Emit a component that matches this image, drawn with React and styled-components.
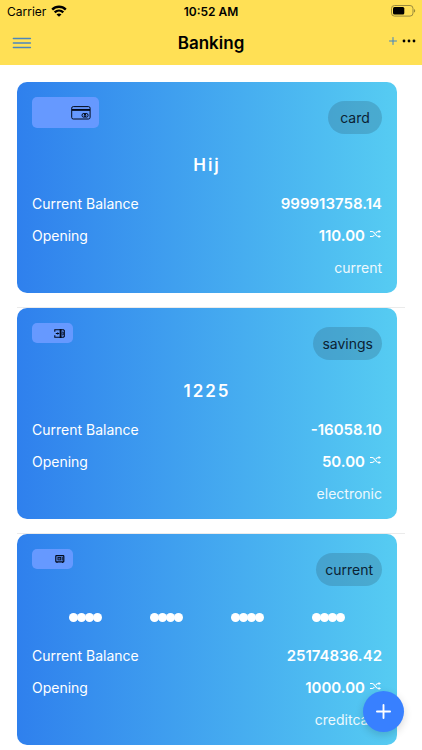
import React from "react";
import styled, { createGlobalStyle } from "styled-components";

const GlobalStyle = createGlobalStyle`
  * { box-sizing: border-box; }
  body {
    margin: 0;
    background: #fff;
    color: #000;
    font-family: Inter, "Liberation Sans", sans-serif;
    font-size: 14px;
  }
  button {
    padding: 0;
    border: 0;
    background: none;
    color: inherit;
    font: inherit;
    cursor: pointer;
  }
  svg { display: block; }
`;

const Header = styled.header`
  height: 65px;
  background: #ffe055;
`;

const StatusBar = styled.div`
  display: grid;
  grid-template-columns: 1fr auto 1fr;
  align-items: center;
  height: 22px;
  padding: 0 6px;
  font-size: 12px;
`;

const Carrier = styled.span`
  display: flex;
  align-items: center;
  gap: 5px;
  padding-left: 1px;
`;

const Clock = styled.time`
  font-weight: 600;
`;

const BatterySlot = styled.span`
  justify-self: end;
`;

const NavBar = styled.nav`
  display: grid;
  grid-template-columns: 1fr auto 1fr;
  align-items: center;
  height: 42px;
  padding: 0 6px;
`;

const MenuButton = styled.button`
  justify-self: start;
  padding-left: 6px;
`;

const Title = styled.h1`
  margin: 0;
  font-size: 17px;
  font-weight: 600;
`;

const Actions = styled.div`
  display: flex;
  align-items: center;
  justify-self: end;
  gap: 5px;
  padding-bottom: 4px;
`;

const AccountList = styled.ul`
  margin: 0;
  padding: 17px 17px 0;
  list-style: none;
`;

const AccountItem = styled.li`
  padding-bottom: 14px;
  border-bottom: 1px solid #ebebeb;

  &:last-child {
    padding-bottom: 0;
    border-bottom: 0;
  }
`;

const Card = styled.article`
  margin-right: 8px;
  padding: 15px 15px 10px;
  border-radius: 10px;
  background: linear-gradient(to right, #2f80ed, #56ccf2);
  color: #fff;
`;

const CardTop = styled.div`
  display: flex;
  align-items: flex-start;
  justify-content: space-between;
  height: 52px;
`;

const Chip = styled.span`
  display: flex;
  align-items: center;
  justify-content: flex-end;
  width: ${(p) => (p.$large ? "67px" : "41px")};
  height: ${(p) => (p.$large ? "31px" : "20px")};
  padding-right: 8px;
  border-radius: 5px;
  background: #6699ff;
  color: #020a1c;
`;

const Pill = styled.span`
  display: flex;
  align-items: center;
  justify-content: center;
  min-width: 54px;
  height: 33px;
  margin-top: 4px;
  padding: 0 9px;
  border-radius: 17px;
  background: rgba(51, 102, 128, 0.3);
  color: #0b2233;
`;

const AccountName = styled.h2`
  display: flex;
  align-items: center;
  justify-content: center;
  gap: 48px;
  height: 32px;
  margin: 0 0 6px;
  font-size: 17px;
  font-weight: 600;
  letter-spacing: 2px;
`;

const DotGroup = styled.span`
  display: flex;
  width: 33px;
`;

const Dot = styled.span`
  width: 9px;
  height: 9px;
  margin-right: -1px;
  flex: none;
  border-radius: 50%;
  background: #fff;
`;

const Row = styled.div`
  display: flex;
  align-items: center;
  justify-content: space-between;
  height: 32px;
`;

const Details = styled.dl`
  margin: 0;
`;

const Label = styled.dt`
  font-weight: 400;
`;

const Amount = styled.dd`
  display: flex;
  align-items: center;
  gap: 5px;
  margin: 0;
  font-size: 15px;
  font-weight: 600;
`;

const ShuffleButton = styled.button`
  padding: 0 1px 3px 0;
`;

const Kind = styled.dd`
  margin: 0 0 0 auto;
  opacity: 0.9;
`;

const Fab = styled.button`
  position: fixed;
  right: 18px;
  bottom: 18px;
  display: grid;
  place-items: center;
  width: 41px;
  height: 41px;
  border-radius: 50%;
  background: #3880ff;
  color: #fff;
  box-shadow: 0 3px 8px rgba(0, 0, 0, 0.16);
`;

const WifiIcon = () => (
  <svg width="16" height="12" viewBox="0 0 16 12" fill="none" stroke="#000" strokeWidth="2.4" aria-hidden="true">
    <path d="M1.2 4.6C5 .8 11 .8 14.8 4.6" />
    <path d="M3.7 7.4c2.5-2.4 6.1-2.4 8.6 0" />
    <path d="M8 11.8 5.5 9.4c1.4-1.2 3.6-1.2 5 0z" fill="#000" stroke="none" />
  </svg>
);

const BatteryIcon = () => (
  <svg width="25" height="12" viewBox="0 0 25 12" aria-hidden="true">
    <rect x=".5" y=".5" width="21.5" height="10.6" rx="3" fill="none" stroke="#9b8b3e" />
    <rect x="2" y="2" width="11.3" height="7.6" rx="1.5" fill="#000" />
    <path d="M23.2 4c1.3.5 1.3 3.1 0 3.6z" fill="#85772f" />
  </svg>
);

const MenuIcon = () => (
  <svg width="20" height="12" viewBox="0 0 20 12" stroke="#4c86bd" strokeWidth="1.5" strokeLinecap="round" aria-hidden="true">
    <path d="M1.4 1.4h17M1.4 6h17M1.4 10.6h17" />
  </svg>
);

const PlusIcon = ({ size, stroke }) => (
  <svg width={size} height={size} viewBox="0 0 16 16" fill="none" stroke="currentColor" strokeWidth={stroke} strokeLinecap="round" aria-hidden="true">
    <path d="M8 1v14M1 8h14" />
  </svg>
);

const AddButton = styled.button`
  color: #4084c4;
`;

const MoreIcon = () => (
  <svg width="14" height="4" viewBox="0 0 14 4" fill="#000" aria-hidden="true">
    <circle cx="2" cy="2" r="1.4" />
    <circle cx="7" cy="2" r="1.4" />
    <circle cx="12" cy="2" r="1.4" />
  </svg>
);

const ShuffleIcon = () => (
  <svg width="11" height="8" viewBox="0 0 11 8" fill="none" stroke="#fff" strokeWidth="1.1" aria-hidden="true">
    <path d="M0 1.5h2.2C5 1.5 5.4 6.5 8.2 6.5h1.2M0 6.5h2.2c1 0 1.6-.7 2.2-1.5M5.9 3c.6-.9 1.3-1.5 2.5-1.5h1" />
    <path d="M8.6 0 11 1.5 8.6 3zM8.6 5 11 6.5 8.6 8z" fill="#fff" stroke="none" />
  </svg>
);

const CreditCardIcon = () => (
  <svg width="20" height="14" viewBox="0 0 20 14" fill="none" stroke="currentColor" aria-hidden="true">
    <rect x=".7" y=".6" width="18.4" height="12.4" rx="1.6" />
    <path d="M1 3.9h18" strokeWidth="1.9" />
    <circle cx="12.9" cy="9.3" r="1.9" />
    <circle cx="15.2" cy="9.3" r="1.9" />
  </svg>
);

const CashIcon = () => (
  <svg width="11" height="9" viewBox="0 0 11 9" fill="none" stroke="currentColor" strokeWidth="1.1" aria-hidden="true">
    <path d="M6 .8H.8v2M.8 6.2v2H6M1.8 4.5h3.4M3.7 3.4v2.2" />
    <path d="M6.6 0v9" strokeWidth="1.9" />
    <path d="M6.8.8h2.7l.8.8v5.8l-.8.8H6.8" />
    <ellipse cx="8.8" cy="4.5" rx=".7" ry="1.7" strokeWidth=".8" />
  </svg>
);

const SafeIcon = () => (
  <svg width="10" height="8" viewBox="0 0 10 8" fill="none" stroke="currentColor" aria-hidden="true">
    <rect x=".8" y=".6" width="8" height="6.2" rx=".6" strokeWidth="1.2" />
    <rect x="2.9" y="2.4" width="2.8" height="2.6" fill="currentColor" fillOpacity=".4" strokeWidth=".8" />
    <path d="M7.2 2v3.6M2 7v1M7.6 7v1" />
  </svg>
);

const accounts = [
  { name: "Hij", type: "card", icon: CreditCardIcon, balance: "999913758.14", opening: "110.00", kind: "current", large: true },
  { name: "1225", type: "savings", icon: CashIcon, balance: "-16058.10", opening: "50.00", kind: "electronic" },
  { name: null, type: "current", icon: SafeIcon, balance: "25174836.42", opening: "1000.00", kind: "creditcard" },
];

const MaskedNumber = () =>
  [0, 1, 2, 3].map((group) => (
    <DotGroup key={group}>
      {[0, 1, 2, 3].map((dot) => (
        <Dot key={dot} />
      ))}
    </DotGroup>
  ));

const AccountCard = ({ name, type, icon: Icon, balance, opening, kind, large }) => (
  <Card>
    <CardTop>
      <Chip $large={large}>
        <Icon />
      </Chip>
      <Pill>{type}</Pill>
    </CardTop>
    <AccountName>{name || <MaskedNumber />}</AccountName>
    <Details>
      <Row>
        <Label>Current Balance</Label>
        <Amount>{balance}</Amount>
      </Row>
      <Row>
        <Label>Opening</Label>
        <Amount>
          {opening}
          <ShuffleButton type="button" aria-label="Transfer">
            <ShuffleIcon />
          </ShuffleButton>
        </Amount>
      </Row>
      <Row>
        <Kind>{kind}</Kind>
      </Row>
    </Details>
  </Card>
);

export default function App() {
  return (
    <>
      <GlobalStyle />
      <Header>
        <StatusBar>
          <Carrier>
            Carrier
            <WifiIcon />
          </Carrier>
          <Clock>10:52 AM</Clock>
          <BatterySlot>
            <BatteryIcon />
          </BatterySlot>
        </StatusBar>
        <NavBar>
          <MenuButton type="button" aria-label="Menu">
            <MenuIcon />
          </MenuButton>
          <Title>Banking</Title>
          <Actions>
            <AddButton type="button" aria-label="Add account">
              <PlusIcon size={8} stroke={2} />
            </AddButton>
            <button type="button" aria-label="More options">
              <MoreIcon />
            </button>
          </Actions>
        </NavBar>
      </Header>
      <main>
        <AccountList>
          {accounts.map((account) => (
            <AccountItem key={account.type}>
              <AccountCard {...account} />
            </AccountItem>
          ))}
        </AccountList>
      </main>
      <Fab type="button" aria-label="Add">
        <PlusIcon size={15} stroke={2} />
      </Fab>
    </>
  );
}
